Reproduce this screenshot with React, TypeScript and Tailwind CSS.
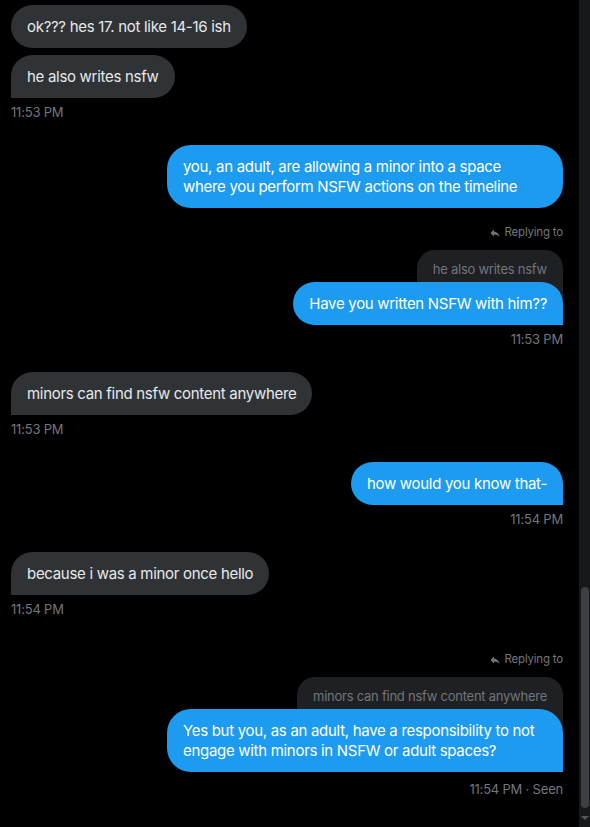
import React from "react";

const font = { fontFamily: "Inter, 'Noto Sans', sans-serif" };

function ReplyIcon() {
  return (
    <svg viewBox="0 0 24 24" className="h-[12px] w-[12px] fill-[#71767b]">
      <path d="M10 9V5l-7 7 7 7v-4.1c5 0 8.5 1.6 11 5.1-1-5-4-10-11-11z" />
    </svg>
  );
}

function Theirs({ text, last }: { text: string; last?: boolean }) {
  return (
    <div className="flex">
      <div
        className={
          "rounded-[24px] bg-[#2f3336] px-4 pt-[12px] pb-[11px] text-[15px] leading-5 tracking-[-0.3px] text-[#e7e9ea] " +
          (last ? "rounded-bl-none" : "")
        }
      >
        {text}
      </div>
    </div>
  );
}

function Mine({
  children,
  last,
  wide,
}: {
  children: React.ReactNode;
  last?: boolean;
  wide?: boolean;
}) {
  return (
    <div className="relative flex justify-end">
      <div
        className={
          "rounded-[24px] bg-[#1d9bf0] px-4 pt-[12px] pb-[11px] text-[15px] leading-5 tracking-[-0.3px] text-white " +
          (last ? "rounded-br-none " : "") +
          (wide ? "w-[396px]" : "")
        }
      >
        {children}
      </div>
    </div>
  );
}

function Quote({ text }: { text: string }) {
  return (
    <div className="flex flex-col items-end">
      <div className="flex h-4 items-center gap-[4px] text-[11.5px] tracking-[-0.2px] text-[#71767b]">
        <ReplyIcon />
        <span>Replying to</span>
      </div>
      <div className="mt-[9px] rounded-t-[18px] bg-[#1e2023] px-4 pt-[11px] pb-[24px] text-[13px] leading-4 tracking-[-0.25px] text-[#71767b]">
        {text}
      </div>
    </div>
  );
}

function Time({ label, right, top = "mt-[6px]" }: { label: string; right?: boolean; top?: string }) {
  return (
    <div
      className={
        top +
        " h-4 text-[13px] leading-4 tracking-[-0.2px] text-[#71767b] " +
        (right ? "text-right" : "")
      }
    >
      {label}
    </div>
  );
}

export default function App() {
  return (
    <div className="flex h-[827px] w-[590px] overflow-hidden bg-black" style={font}>
      <main className="flex flex-1 flex-col pt-[5px] pr-4 pl-[11px]">
        <Theirs text="ok??? hes 17. not like 14-16 ish" />
        <div className="mt-[7px]">
          <Theirs text="he also writes nsfw" last />
        </div>
        <Time label="11:53 PM" />

        <div className="mt-[25px]">
          <Mine wide>
            you, an adult, are allowing a minor into a space
            <br />
            where you perform NSFW actions on the timeline
          </Mine>
        </div>

        <div className="mt-[17px]">
          <Quote text="he also writes nsfw" />
          <div className="-mt-[19px]">
            <Mine last>Have you written NSFW with him??</Mine>
          </div>
        </div>
        <Time label="11:53 PM" right />

        <div className="mt-[25px]">
          <Theirs text="minors can find nsfw content anywhere" last />
        </div>
        <Time label="11:53 PM" />

        <div className="mt-[25px]">
          <Mine last>how would you know that-</Mine>
        </div>
        <Time label="11:54 PM" right />

        <div className="mt-[25px]">
          <Theirs text="because i was a minor once hello" last />
        </div>
        <Time label="11:54 PM" />

        <div className="mt-[35px]">
          <Quote text="minors can find nsfw content anywhere" />
          <div className="-mt-[19px]">
            <Mine last wide>
              Yes but you, as an adult, have a responsibility to not
              <br />
              engage with minors in NSFW or adult spaces?
            </Mine>
          </div>
        </div>
        <Time label="11:54 PM · Seen" right top="mt-[9px]" />
      </main>

      <aside className="flex w-[11px] flex-col bg-[#17181a]">
        <div className="mt-auto ml-[2px] h-[221px] w-[8px] rounded-full bg-[#3c3f43]" />
        <div className="flex h-[19px] items-center justify-center">
          <div className="h-0 w-0 border-x-[4px] border-t-[4px] border-x-transparent border-t-[#55585c]" />
        </div>
      </aside>
    </div>
  );
}
